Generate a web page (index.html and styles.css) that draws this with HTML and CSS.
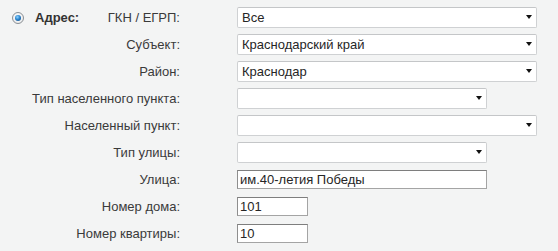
FILE: index.html
```html
<!DOCTYPE html>
<html lang="ru">
<head>
<meta charset="utf-8">
<link rel="stylesheet" href="styles.css">
</head>
<body>
<form class="form">
  <div class="label first">
    <span class="radio-group"><span class="radio"><span class="dot"></span></span><b class="radio-text">Адрес:</b></span>
    <span>ГКН / ЕГРП:</span>
  </div>
  <div class="field"><span class="sel wide"><select><option>Все</option></select></span></div>

  <div class="label">Субъект:</div>
  <div class="field"><span class="sel wide"><select><option>Краснодарский край</option></select></span></div>

  <div class="label">Район:</div>
  <div class="field"><span class="sel wide"><select><option>Краснодар</option></select></span></div>

  <div class="label">Тип населенного пункта:</div>
  <div class="field"><span class="sel narrow"><select><option></option></select></span></div>

  <div class="label">Населенный пункт:</div>
  <div class="field"><span class="sel wide"><select><option></option></select></span></div>

  <div class="label">Тип улицы:</div>
  <div class="field"><span class="sel narrow"><select><option></option></select></span></div>

  <div class="label">Улица:</div>
  <div class="field"><input class="txt street" type="text" value="им.40-летия Победы"></div>

  <div class="label">Номер дома:</div>
  <div class="field"><input class="txt short" type="text" value="101"></div>

  <div class="label">Номер квартиры:</div>
  <div class="field"><input class="txt short" type="text" value="10"></div>
</form>
</body>
</html>
```

FILE: styles.css
```css
html, body {
  margin: 0;
  padding: 0;
  background: #f3f4f4;
}
body {
  font-family: "Liberation Sans", Arial, sans-serif;
  font-size: 13px;
  color: #333;
}
.form {
  display: grid;
  grid-template-columns: 168px 300px;
  grid-auto-rows: 27px;
  column-gap: 57px;
  align-items: center;
  padding: 4px 0 0 12px;
}
.label {
  text-align: right;
  white-space: nowrap;
  color: #3a3a3a;
}
.label.first {
  display: flex;
  justify-content: space-between;
  align-items: center;
}
.radio-group {
  display: flex;
  align-items: center;
  gap: 11px;
}
.radio-text {
  color: #333;
  font-weight: bold;
}
.radio {
  box-sizing: border-box;
  width: 12px;
  height: 12px;
  border-radius: 50%;
  border: 1px solid #8a8f94;
  background: radial-gradient(circle at 50% 40%, #ffffff 0%, #e4e6e8 100%);
  display: flex;
  align-items: center;
  justify-content: center;
}
.dot {
  width: 6px;
  height: 6px;
  border-radius: 50%;
  background: radial-gradient(circle at 40% 35%, #8fd3ff 0%, #2a86cf 45%, #0f3f78 100%);
}
.field {
  display: flex;
  align-items: center;
}
.sel {
  position: relative;
  display: block;
  height: 21px;
}
.sel.wide { width: 300px; }
.sel.narrow { width: 250px; }
.sel select {
  appearance: none;
  -webkit-appearance: none;
  box-sizing: border-box;
  width: 100%;
  height: 21px;
  margin: 0;
  border: 1px solid #cfd1d3;
  border-top-color: #c4c6c8;
  border-radius: 2px;
  background: #fff;
  font-family: "Liberation Sans", Arial, sans-serif;
  font-size: 13px;
  color: #262626;
  padding: 0 20px 0 4px;
  outline: none;
}
.sel::after {
  content: "";
  position: absolute;
  right: 5px;
  top: 8px;
  border-left: 3.5px solid transparent;
  border-right: 3.5px solid transparent;
  border-top: 4px solid #111;
}
.txt {
  box-sizing: border-box;
  height: 19px;
  margin: 0;
  border: 1px solid #a4a4a4;
  border-top-color: #7e7e7e;
  border-left-color: #8e8e8e;
  background: #fff;
  font-family: "Liberation Sans", Arial, sans-serif;
  font-size: 13px;
  color: #262626;
  padding: 0 2px;
  outline: none;
}
.txt.street { width: 250px; }
.txt.short { width: 71px; }
```
